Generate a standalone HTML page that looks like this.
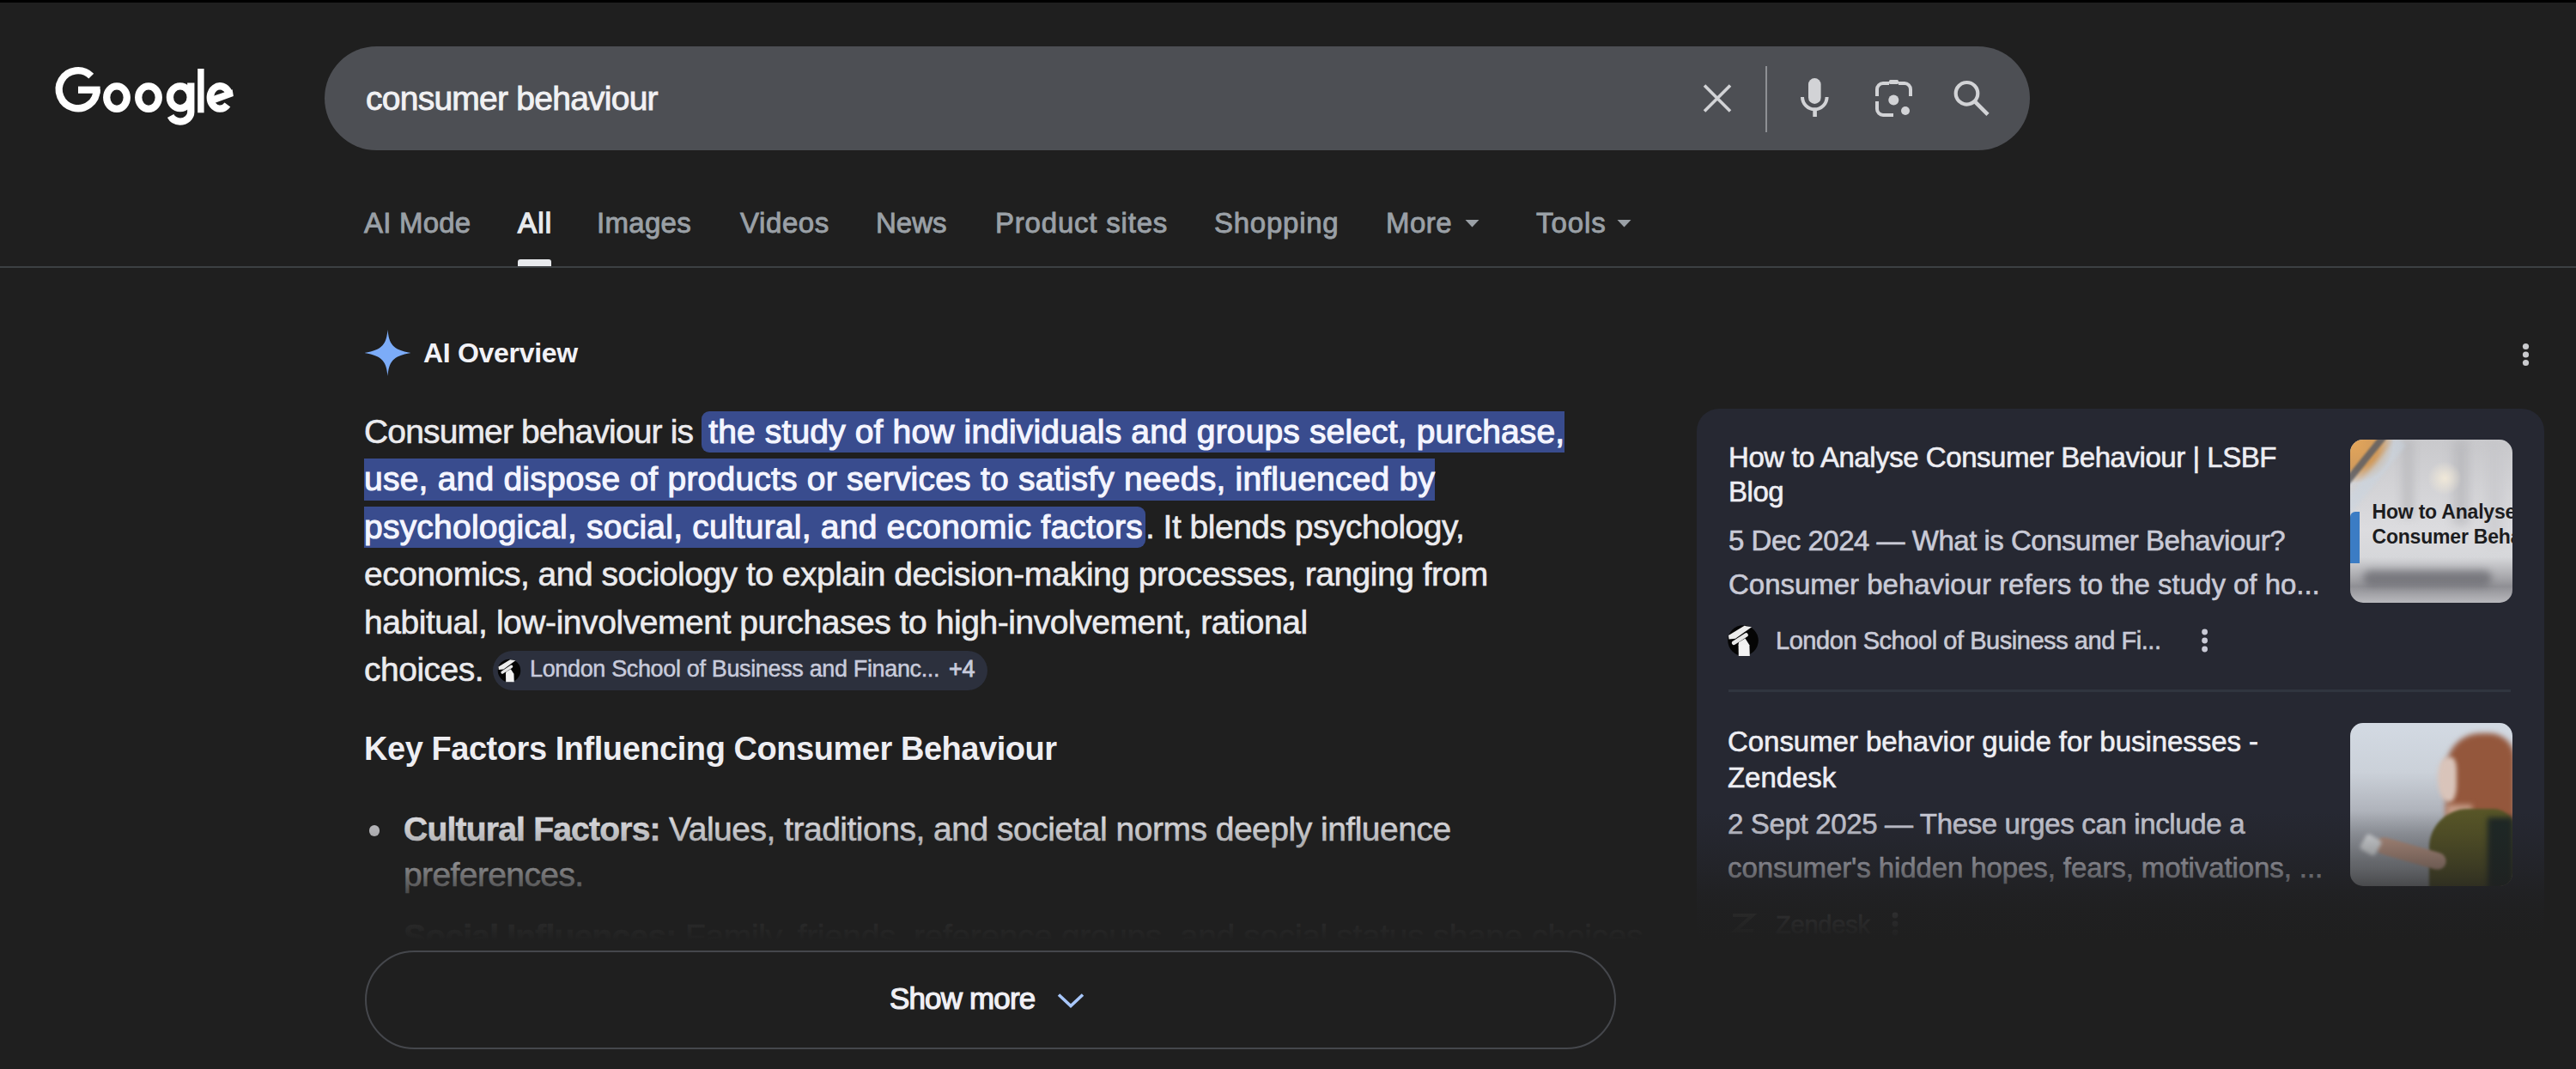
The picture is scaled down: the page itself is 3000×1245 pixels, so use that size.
<!DOCTYPE html><html><head><meta charset="utf-8"><title>consumer behaviour - Google Search</title><style>
*{margin:0;padding:0;box-sizing:border-box}
html,body{width:3000px;height:1245px;overflow:hidden;background:#1f1f1f}
body{position:relative;font-family:"Liberation Sans",sans-serif}
.t{position:absolute;white-space:nowrap}
.abs{position:absolute}
</style></head><body>
<div class="abs" style="left:0;top:0;width:3000px;height:3px;background:#000"></div>
<svg class="abs" style="left:0;top:0" width="300" height="160" viewBox="0 0 300 160">
<g fill="none" stroke="#fff" stroke-width="8.3">
<path d="M106.26 88.64 A22 22 0 1 0 112.7 104.2"/>
<ellipse cx="136" cy="113.6" rx="11.8" ry="13.2"/>
<ellipse cx="173" cy="113.6" rx="11.8" ry="13.2"/>
<ellipse cx="209.8" cy="113.2" rx="11.9" ry="12.9"/>
<path d="M222.3 96.5 V130.5 A12.6 11.2 0 0 1 209.7 141.6 A13 11 0 0 1 198.6 135"/>
<path d="M266.53 107.92 A11.4 13.2 0 1 0 264.93 121.98"/>
</g>
<rect x="91" y="100.6" width="25.6" height="8.2" fill="#fff"/>
<rect x="230.2" y="80" width="7.4" height="51.3" fill="#fff"/>
<path d="M245.5 112.8 L270.6 104.3 L271.9 112 L249.5 120.2 Z" fill="#fff"/>
</svg>
<div class="abs" style="left:378px;top:54px;width:1986px;height:121px;border-radius:60.5px;background:#4d4f54"></div>
<div class="t " style="left:426px;top:88.58px;font-size:39px;line-height:51px;color:#f1f1f3;font-weight:400;letter-spacing:-0.75px;-webkit-text-stroke:0.9px #f1f1f3;">consumer behaviour</div>
<svg class="abs" style="left:1960px;top:60px" width="420" height="110" viewBox="1960 60 420 110">
<g stroke="#d2d3d6" stroke-width="3.6" fill="none" stroke-linecap="butt">
<path d="M1985 99.5 L2015 129.5 M2015 99.5 L1985 129.5"/>
</g>
<rect x="2056" y="77" width="2" height="77" fill="#8e9094"/>
<rect x="2106" y="91" width="14.6" height="30" rx="7.3" fill="#d2d3d6"/>
<path d="M2099 113 A14 14 0 0 0 2127.6 113" stroke="#d2d3d6" stroke-width="4" fill="none"/>
<rect x="2111.3" y="127" width="4.6" height="9" fill="#d2d3d6"/>
<g stroke="#d2d3d6" stroke-width="4" fill="none">
<path d="M2186 112 V104 A7 7 0 0 1 2193 97 H2200 M2211 97 H2218 A7 7 0 0 1 2225 104 V112"/>
<path d="M2186 118 V127 A7 7 0 0 0 2193 134 H2205"/>
</g>
<rect x="2200" y="93" width="11" height="5" rx="1.5" fill="#d2d3d6"/>
<circle cx="2205.3" cy="116.5" r="6" fill="#d2d3d6"/>
<circle cx="2219" cy="129" r="5" fill="#d2d3d6"/>
<circle cx="2290.5" cy="108.8" r="12.8" stroke="#d2d3d6" stroke-width="4.2" fill="none"/>
<path d="M2300 118.3 L2315 133.3" stroke="#d2d3d6" stroke-width="4.6"/>
</svg>
<div class="t " style="left:424px;top:238.06px;font-size:33px;line-height:43px;color:#9aa0a6;font-weight:400;letter-spacing:0.2px;-webkit-text-stroke:0.9px #9aa0a6;">AI Mode</div>
<div class="t " style="left:603px;top:238.06px;font-size:33px;line-height:43px;color:#e8eaed;font-weight:400;letter-spacing:1.2px;-webkit-text-stroke:1.4px #e8eaed;">All</div>
<div class="t " style="left:695px;top:238.06px;font-size:33px;line-height:43px;color:#9aa0a6;font-weight:400;letter-spacing:0.3px;-webkit-text-stroke:0.9px #9aa0a6;">Images</div>
<div class="t " style="left:862px;top:238.06px;font-size:33px;line-height:43px;color:#9aa0a6;font-weight:400;letter-spacing:0.6px;-webkit-text-stroke:0.9px #9aa0a6;">Videos</div>
<div class="t " style="left:1020px;top:238.06px;font-size:33px;line-height:43px;color:#9aa0a6;font-weight:400;letter-spacing:0px;-webkit-text-stroke:0.9px #9aa0a6;">News</div>
<div class="t " style="left:1159px;top:238.06px;font-size:33px;line-height:43px;color:#9aa0a6;font-weight:400;letter-spacing:0.8px;-webkit-text-stroke:0.9px #9aa0a6;">Product sites</div>
<div class="t " style="left:1414px;top:238.06px;font-size:33px;line-height:43px;color:#9aa0a6;font-weight:400;letter-spacing:0.75px;-webkit-text-stroke:0.9px #9aa0a6;">Shopping</div>
<div class="t " style="left:1614px;top:238.06px;font-size:33px;line-height:43px;color:#9aa0a6;font-weight:400;letter-spacing:0.5px;-webkit-text-stroke:0.9px #9aa0a6;">More</div>
<div class="t " style="left:1789px;top:238.06px;font-size:33px;line-height:43px;color:#9aa0a6;font-weight:400;letter-spacing:0.9px;-webkit-text-stroke:0.9px #9aa0a6;">Tools</div>
<svg class="abs" style="left:1700px;top:250px" width="210" height="20" viewBox="1700 250 210 20"><path d="M1706.5 256 H1722.5 L1714.5 264.5 Z" fill="#9aa0a6"/><path d="M1883.5 256 H1899.5 L1891.5 264.5 Z" fill="#9aa0a6"/></svg>
<div class="abs" style="left:603px;top:302px;width:39px;height:8px;border-radius:3px 3px 0 0;background:#e8eaed"></div>
<div class="abs" style="left:0;top:309.5px;width:3000px;height:2px;background:#3c4043"></div>
<svg class="abs" style="left:420px;top:380px" width="64" height="64" viewBox="0 0 64 64">
<path d="M31.5 4 C33 20 37 27.5 58.5 31 C37 34.5 33 42 31.5 58 C30 42 26 34.5 4.5 31 C26 27.5 30 20 31.5 4 Z" fill="#7cacf8"/></svg>
<div class="t " style="left:493px;top:390.21px;font-size:32px;line-height:42px;color:#f2f2f7;font-weight:700;letter-spacing:-0.3px;">AI Overview</div>
<svg class="abs" style="left:2930px;top:395px" width="24" height="36" viewBox="2930 395 24 36"><circle cx="2941.5" cy="403.5" r="3.6" fill="#c9cacd"/><circle cx="2941.5" cy="413" r="3.6" fill="#c9cacd"/><circle cx="2941.5" cy="422.5" r="3.6" fill="#c9cacd"/></svg>
<div class="abs" style="left:424px;top:474.88px;width:1500px;font-size:39px;line-height:55.4px;color:#ebebee;letter-spacing:-0.5px;white-space:nowrap;-webkit-text-stroke:0.6px #ebebee"><span style="letter-spacing:-0.85px">Consumer behaviour is </span><span style="background:#394c8e;color:#f4f5ff;-webkit-text-stroke:1.1px #f4f5ff;padding:2px 3px 3.5px 8px;border-radius:9px;letter-spacing:0.22px"><span style="letter-spacing:0.15px">the study of how individuals and groups select, purchase,</span><br>use, and dispose of products or services to satisfy needs, influenced by<br>psychological, social, cultural, and economic factors</span>. It blends psychology,<br>economics, and sociology to explain decision-making processes, ranging from<br><span style="letter-spacing:-0.44px">habitual, low-involvement purchases to high-involvement, rational</span><br>choices.</div>
<div class="abs" style="left:573.5px;top:757.5px;width:576px;height:46px;border-radius:23px;background:#2c303d"></div>
<svg class="abs" style="left:579px;top:766.5px" width="28" height="28" viewBox="0 0 38 38"><circle cx="19" cy="19" r="18" fill="#050505"/>
<path d="M2 13 L20.5 1.8 L29 3.2 L10 16.8 L2.5 17.5 Z" fill="#ececec"/><path d="M8.2 21.8 L22.5 12.5" stroke="#e8e8e8" stroke-width="4.6" stroke-linecap="round"/>
<path d="M14 21 L21.5 16.5 L26.5 24.5 L13.5 24.5 Z" fill="#f0f0f0"/><path d="M13.6 24 L26.4 24 L26.8 37 L13.8 37 Z" fill="#f2f2f2"/></svg>
<div class="t " style="left:617px;top:762.14px;font-size:27px;line-height:35px;color:#c8cbdc;font-weight:400;letter-spacing:-0.35px;-webkit-text-stroke:0.5px #c8cbdc;">London School of Business and Financ...</div>
<div class="t " style="left:1105px;top:762.14px;font-size:27px;line-height:35px;color:#c8cbdc;font-weight:400;letter-spacing:-0.3px;-webkit-text-stroke:0.8px #c8cbdc;">+4</div>
<div class="t " style="left:424px;top:848.33px;font-size:38px;line-height:49px;color:#eeeef2;font-weight:700;letter-spacing:-0.45px;">Key Factors Influencing Consumer Behaviour</div>
<div class="abs" style="left:429.5px;top:961px;width:12.5px;height:12.5px;border-radius:50%;background:#c8c8cc"></div>
<div class="t " style="left:470px;top:939.58px;font-size:39px;line-height:51px;color:#e2e2e6;font-weight:400;letter-spacing:-0.5px;-webkit-text-stroke:0.55px #e2e2e6;"><b style="letter-spacing:-0.78px">Cultural Factors:</b> Values, traditions, and societal norms deeply influence</div>
<div class="t " style="left:470px;top:993.48px;font-size:39px;line-height:51px;color:#e2e2e6;font-weight:400;letter-spacing:-0.6px;-webkit-text-stroke:0.55px #e2e2e6;">preferences.</div>
<div class="t " style="left:470px;top:1064.98px;font-size:39px;line-height:51px;color:#e2e2e6;font-weight:400;letter-spacing:-0.37px;-webkit-text-stroke:0.5px #e2e2e6;"><b style="letter-spacing:-0.78px">Social Influences:</b> Family, friends, reference groups, and social status shape choices.</div>
<div class="abs" style="left:1975.5px;top:476px;width:987px;height:632px;border-radius:26px;background:#262832"></div>
<div class="t " style="left:2013px;top:510.76px;font-size:33px;line-height:43px;color:#eeeef3;font-weight:400;letter-spacing:-0.45px;-webkit-text-stroke:0.6px #eeeef3;">How to Analyse Consumer Behaviour | LSBF</div>
<div class="t " style="left:2013px;top:551.36px;font-size:33px;line-height:43px;color:#eeeef3;font-weight:400;letter-spacing:-0.45px;-webkit-text-stroke:0.6px #eeeef3;">Blog</div>
<div class="t " style="left:2013px;top:607.66px;font-size:33px;line-height:43px;color:#c9cad6;font-weight:400;letter-spacing:-0.49px;-webkit-text-stroke:0.6px #c9cad6;">5 Dec 2024 — What is Consumer Behaviour?</div>
<div class="t " style="left:2013px;top:658.66px;font-size:33px;line-height:43px;color:#c9cad6;font-weight:400;letter-spacing:-0.02px;-webkit-text-stroke:0.6px #c9cad6;">Consumer behaviour refers to the study of ho...</div>
<svg class="abs" style="left:2011px;top:726.6px" width="38" height="38" viewBox="0 0 38 38"><circle cx="19" cy="19" r="17.8" fill="#050505"/>
<path d="M2 13 L20.5 1.8 L29 3.2 L10 16.8 L2.5 17.5 Z" fill="#ececec"/><path d="M8.2 21.8 L22.5 12.5" stroke="#e8e8e8" stroke-width="4.6" stroke-linecap="round"/>
<path d="M14 21 L21.5 16.5 L26.5 24.5 L13.5 24.5 Z" fill="#f0f0f0"/><path d="M13.6 24 L26.4 24 L26.8 37 L13.8 37 Z" fill="#f2f2f2"/></svg>
<div class="t " style="left:2068px;top:726.55px;font-size:29px;line-height:38px;color:#c9cad6;font-weight:400;letter-spacing:-0.45px;-webkit-text-stroke:0.6px #c9cad6;">London School of Business and Fi...</div>
<svg class="abs" style="left:2560px;top:728px" width="16" height="36" viewBox="2560 728 16 36"><circle cx="2567.6" cy="736" r="3.4" fill="#c9cad6"/><circle cx="2567.6" cy="746" r="3.4" fill="#c9cad6"/><circle cx="2567.6" cy="756" r="3.4" fill="#c9cad6"/></svg>
<div class="abs" style="left:2013px;top:802.5px;width:911px;height:3px;background:#30353f"></div>
<div class="abs" style="left:2736.5px;top:512.3px;width:189.3px;height:189.4px;border-radius:15px;overflow:hidden;background:linear-gradient(180deg,#c9c9cc 0%,#d3d3d6 30%,#dcdcdf 55%,#d6d7da 72%,#a9a9ad 84%,#8f8f94 90%,#b9b9bd 100%)">
<div class="abs" style="left:60px;top:0;width:14px;height:90px;background:#b8b8bb;filter:blur(5px);opacity:.7"></div>
<div class="abs" style="left:120px;top:0;width:18px;height:100px;background:#b0b0b4;filter:blur(6px);opacity:.6"></div>
<div class="abs" style="left:160px;top:0;width:16px;height:120px;background:#c4c4c8;filter:blur(6px);opacity:.6"></div>
<div class="abs" style="left:-20px;top:-20px;width:70px;height:70px;background:radial-gradient(circle at 35% 35%,#e2a55a 0%,#d09a5c 45%,rgba(200,150,90,0) 72%)"></div>
<div class="abs" style="left:-35px;top:22px;width:100px;height:8px;background:#5d5f64;transform:rotate(-51deg);opacity:.85;filter:blur(1px)"></div>
<div class="abs" style="left:-30px;top:38px;width:110px;height:14px;background:#c8d4e0;transform:rotate(-51deg);opacity:.5;filter:blur(2px)"></div>
<div class="abs" style="left:90px;top:25px;width:40px;height:40px;background:radial-gradient(circle,#f0e8d8 0%,rgba(240,232,216,0) 70%)"></div>
<div class="abs" style="left:0px;top:84px;width:11px;height:60px;background:#3b7cc4;border-radius:6px 0 0 0"></div>
<div class="abs" style="left:15px;top:152px;width:150px;height:18px;border-radius:9px;background:#55555c;opacity:.55;filter:blur(4px)"></div>
<div class="t" style="left:26px;top:70px;font-size:23px;line-height:29px;font-weight:700;color:#1c1c1e;letter-spacing:-0.2px">How to Analyse<br>Consumer Behaviour</div>
</div>
<div class="t " style="left:2012px;top:842.06px;font-size:33px;line-height:43px;color:#eeeef3;font-weight:400;letter-spacing:-0.05px;-webkit-text-stroke:0.6px #eeeef3;">Consumer behavior guide for businesses -</div>
<div class="t " style="left:2012px;top:883.66px;font-size:33px;line-height:43px;color:#eeeef3;font-weight:400;letter-spacing:-0.05px;-webkit-text-stroke:0.6px #eeeef3;">Zendesk</div>
<div class="t " style="left:2012px;top:937.76px;font-size:33px;line-height:43px;color:#c9cad6;font-weight:400;letter-spacing:-0.35px;-webkit-text-stroke:0.6px #c9cad6;">2 Sept 2025 — These urges can include a</div>
<div class="t " style="left:2012px;top:988.56px;font-size:33px;line-height:43px;color:#c9cad6;font-weight:400;letter-spacing:-0.1px;-webkit-text-stroke:0.6px #c9cad6;">consumer&#39;s hidden hopes, fears, motivations, ...</div>
<div class="abs" style="left:2736.5px;top:842.3px;width:189.3px;height:189.4px;border-radius:15px;overflow:hidden;background:linear-gradient(180deg,#d3dae3 0%,#cbd1d9 30%,#b4b8c0 50%,#9da1a9 68%,#9a9ea6 85%,#a9adb4 100%)">
<div class="abs" style="left:112px;top:12px;width:80px;height:130px;border-radius:40px 30px 10px 40px;background:#94573c;filter:blur(3px)"></div>
<div class="abs" style="left:102px;top:40px;width:22px;height:52px;border-radius:50% 30% 40% 60%;background:#d9c4ba;filter:blur(2.5px)"></div>
<div class="abs" style="left:112px;top:95px;width:30px;height:40px;background:#c49a86;filter:blur(3px)"></div>
<div class="abs" style="left:92px;top:100px;width:100px;height:95px;border-radius:45px 25px 0 0;background:#575527;filter:blur(1.5px)"></div>
<div class="abs" style="left:160px;top:110px;width:30px;height:85px;background:#1e2826;filter:blur(3px)"></div>
<div class="abs" style="left:28px;top:142px;width:85px;height:20px;border-radius:10px;background:#b89484;transform:rotate(16deg);filter:blur(1.5px)"></div>

<div class="abs" style="left:14px;top:132px;width:20px;height:20px;border-radius:4px;background:#dfe2e6;transform:rotate(30deg);filter:blur(2px)"></div>
</div>
<svg class="abs" style="left:2011px;top:1056px" width="38" height="38" viewBox="0 0 38 38"><path d="M7 10 H30 L10 28 H31" stroke="#888" stroke-width="4" fill="none"/></svg>
<div class="t " style="left:2068px;top:1057.95px;font-size:29px;line-height:38px;color:#c9cad6;font-weight:400;letter-spacing:-0.2px;-webkit-text-stroke:0.6px #c9cad6;">Zendesk</div>
<svg class="abs" style="left:2200px;top:1060px" width="16" height="36" viewBox="2200 1060 16 36"><circle cx="2207" cy="1066" r="3.4" fill="#c9cad6"/><circle cx="2207" cy="1076" r="3.4" fill="#c9cad6"/><circle cx="2207" cy="1086" r="3.4" fill="#c9cad6"/></svg>
<div class="abs" style="left:380px;top:945px;width:2620px;height:170px;background:linear-gradient(to bottom, rgba(31,31,31,0) 0px, rgba(31,31,31,0.16) 25px, rgba(31,31,31,0.48) 65px, rgba(31,31,31,0.6) 77px, rgba(31,31,31,0.78) 95px, rgba(31,31,31,0.9) 115px, rgba(31,31,31,0.96) 135px, #1f1f1f 150px)"></div>
<div class="abs" style="left:424.5px;top:1107px;width:1457.5px;height:115px;border-radius:57.5px;border:2.5px solid #45474c"></div>
<div class="t " style="left:1036px;top:1139.57px;font-size:35px;line-height:46px;color:#f0f0f5;font-weight:400;letter-spacing:-0.85px;-webkit-text-stroke:1.2px #f0f0f5;">Show more</div>
<svg class="abs" style="left:1225px;top:1148px" width="45" height="32" viewBox="1225 1148 45 32"><path d="M1233 1158.5 L1247 1171.5 L1261 1158.5" stroke="#a8c7fa" stroke-width="3.6" fill="none"/></svg>
</body></html>
